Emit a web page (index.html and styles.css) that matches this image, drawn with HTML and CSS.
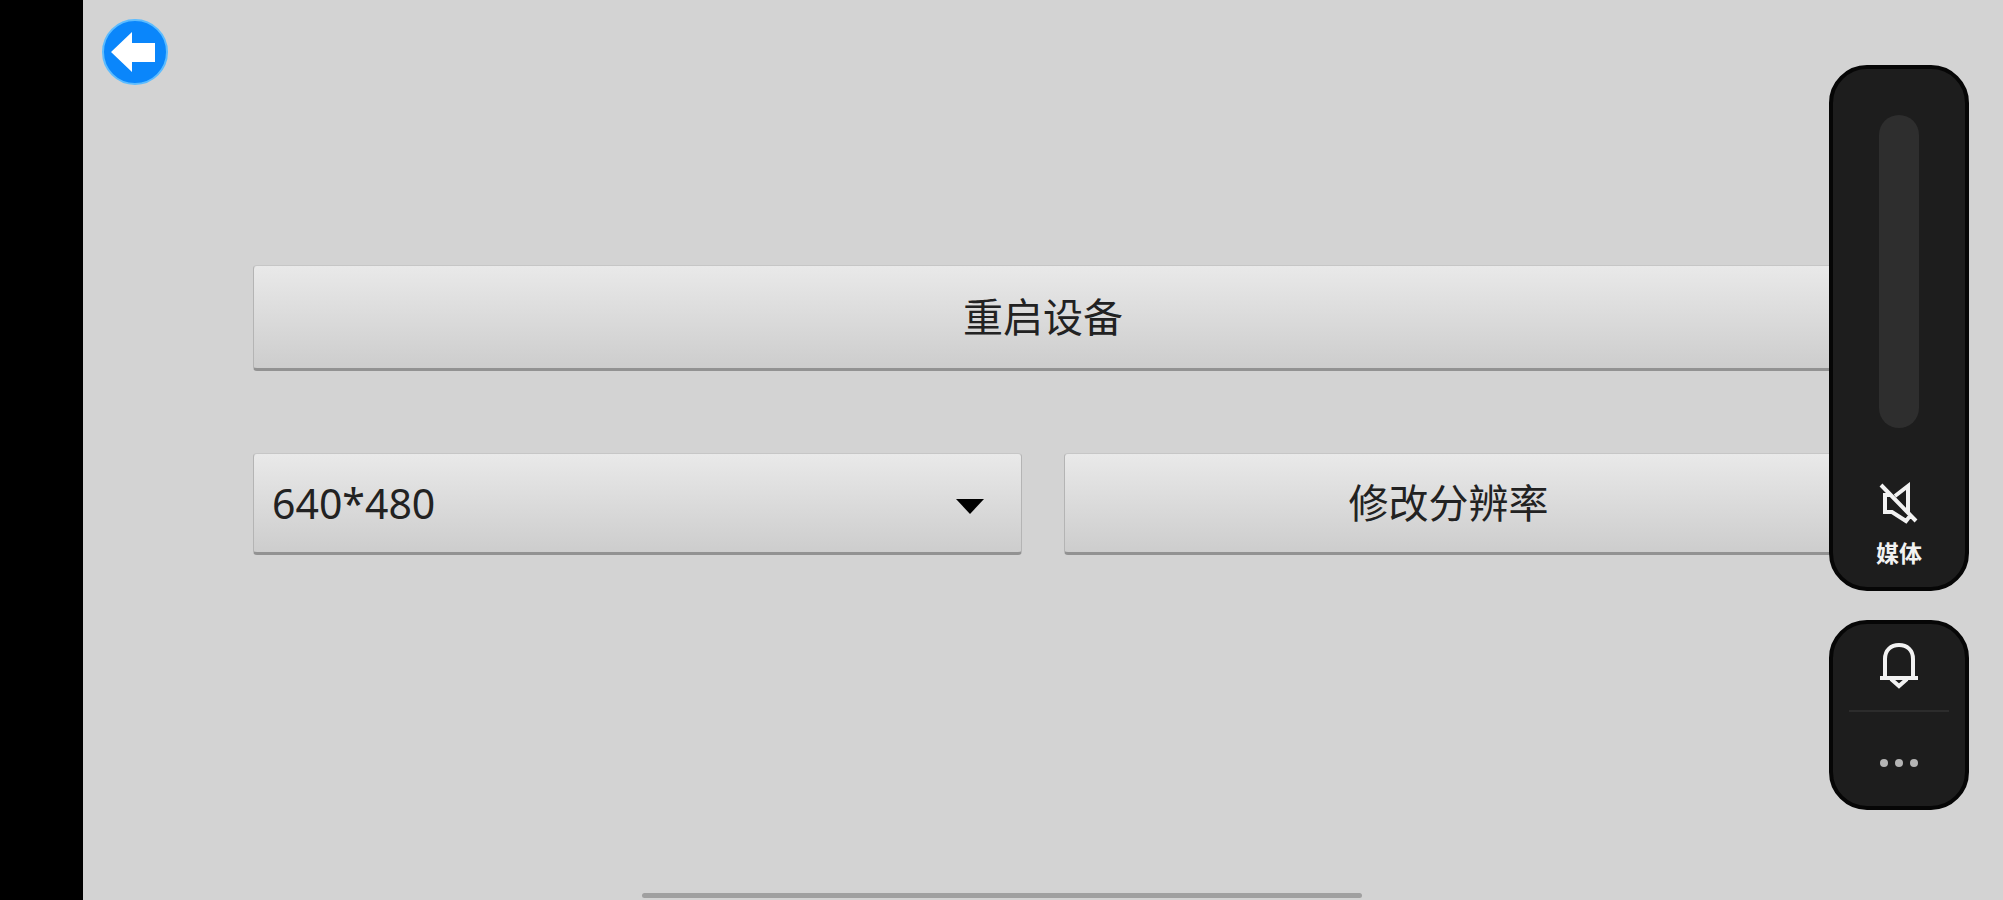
FILE: index.html
```html
<!DOCTYPE html>
<html lang="zh-CN">
<head>
<meta charset="utf-8">
<meta name="viewport" content="width=device-width, initial-scale=1">
<title>设备设置</title>
<link rel="stylesheet" href="styles.css">
</head>
<body>
<div class="screen">
  <main class="content">
    <header class="topbar">
      <button class="back" type="button" aria-label="返回">
        <svg viewBox="0 0 68 68" aria-hidden="true">
          <circle cx="34" cy="34" r="32" fill="#0a86fb" stroke="#5cbcff" stroke-width="2"/>
          <path d="M10 34 31 14V25H54V44H31V54Z" fill="#fff"/>
        </svg>
      </button>
    </header>
    <form class="settings">
      <button class="btn btn-restart" type="button">重启设备</button>
      <div class="row">
        <div class="picker">
          <select class="select" aria-label="分辨率">
            <option>640*480</option>
          </select>
          <svg class="caret" viewBox="0 0 28 15" aria-hidden="true"><path d="M0 0H28L14 15Z"/></svg>
        </div>
        <button class="btn" type="button">修改分辨率</button>
      </div>
    </form>
  </main>

  <aside class="volume">
    <section class="panel panel-media">
      <input class="slider" id="media" type="range" min="0" max="100" value="0">
      <svg class="icon-mute" viewBox="0 0 40 42" aria-hidden="true">
        <path d="M16 14 29 4V30M11 13H6V30H13L27 39L31 34M2 3 37 39"/>
      </svg>
      <label class="media-label" for="media">媒体</label>
    </section>
    <section class="panel panel-actions">
      <button class="action action-bell" type="button" aria-label="响铃">
        <svg class="icon-bell" viewBox="0 0 40 48" aria-hidden="true">
          <path d="M1 37H39M6 37V18C6 9 12 4 20 4S34 9 34 18V37M12 38 20 45 28 38"/>
        </svg>
      </button>
      <button class="action action-more" type="button" aria-label="更多">
        <svg class="icon-more" viewBox="0 0 40 10" aria-hidden="true">
          <circle cx="5" cy="5" r="4"/><circle cx="20" cy="5" r="4"/><circle cx="35" cy="5" r="4"/>
        </svg>
      </button>
    </section>
  </aside>
  <div class="home-bar"></div>
</div>
</body>
</html>
```
FILE: styles.css
```css
* {
  box-sizing: border-box;
}

body {
  margin: 0;
  background: #d3d3d3;
  color: #222;
  font-family: "Noto Sans", "Noto Sans CJK SC", sans-serif;
}

button {
  padding: 0;
  border: 0;
  background: none;
  color: inherit;
  font: inherit;
}

.screen {
  position: relative;
  min-height: 100vh;
  border-left: 83px solid #000;
  overflow: hidden;
}

.topbar {
  display: flex;
  padding: 18px;
}

.back,
.back svg {
  display: block;
  width: 68px;
  height: 68px;
}

.settings {
  display: flex;
  flex-direction: column;
  gap: 82px;
  padding: 161px 170px 0 170px;
}

.row {
  display: grid;
  grid-template-columns: 1fr 1fr;
  gap: 42px;
}

.btn,
.select {
  width: 100%;
  height: 102px;
  border: 1px solid #b4b4b4;
  border-top-color: #c6c6c6;
  border-bottom: 3px solid #929292;
  border-radius: 4px;
  background: linear-gradient(#e9e9e9, #dbdbdb 50%, #cdcdcd);
  font-family: "Noto Sans CJK SC", sans-serif;
  font-size: 40px;
  font-weight: 400;
  line-height: 48px;
  text-align: center;
}

.btn {
  padding-bottom: 4px;
}

.btn-restart {
  height: 106px;
}

.picker {
  position: relative;
}

.select {
  display: block;
  padding: 0 18px;
  appearance: none;
  color: #222;
  font-family: "Noto Sans", sans-serif;
  font-size: 41px;
  text-align: left;
}

.caret {
  position: absolute;
  top: 46px;
  right: 38px;
  width: 28px;
  height: 15px;
  pointer-events: none;
}

.volume {
  position: absolute;
  top: 65px;
  right: 34px;
  display: flex;
  flex-direction: column;
  gap: 29px;
  width: 140px;
}

.panel {
  display: flex;
  flex-direction: column;
  align-items: center;
  border: 4px solid #060606;
  border-radius: 38px;
  background: #1d1d1d;
  color: #f2f2f2;
}

.panel-media {
  padding: 46px 0 18px;
}

.slider {
  width: 40px;
  height: 313px;
  margin: 0 0 54px;
  appearance: none;
  writing-mode: vertical-lr;
  direction: rtl;
  border-radius: 20px;
  background: #2e2e2e;
}

.slider::-webkit-slider-thumb {
  width: 40px;
  height: 40px;
  appearance: none;
  background: transparent;
}

.icon-mute {
  width: 40px;
  height: 42px;
}

.icon-mute,
.icon-bell {
  fill: none;
  stroke: #f2f2f2;
  stroke-width: 4;
}

.media-label {
  margin-top: 11px;
  font-family: "Noto Sans CJK SC", sans-serif;
  font-size: 23px;
  font-weight: 700;
  line-height: 34px;
}

.panel-actions {
  padding: 0 16px;
}

.action {
  display: flex;
  justify-content: center;
  align-items: center;
  width: 100%;
}

.action-bell {
  height: 88px;
  padding-bottom: 4px;
  border-bottom: 2px solid #2c2c2c;
}

.action-more {
  height: 94px;
  padding-top: 8px;
}

.icon-bell {
  width: 40px;
  height: 48px;
}

.icon-more {
  width: 40px;
  height: 10px;
  fill: #b4b4b4;
}

.home-bar {
  position: absolute;
  bottom: 2px;
  left: 559px;
  width: 720px;
  height: 5px;
  border-radius: 3px;
  background: #a0a0a0;
}
```
